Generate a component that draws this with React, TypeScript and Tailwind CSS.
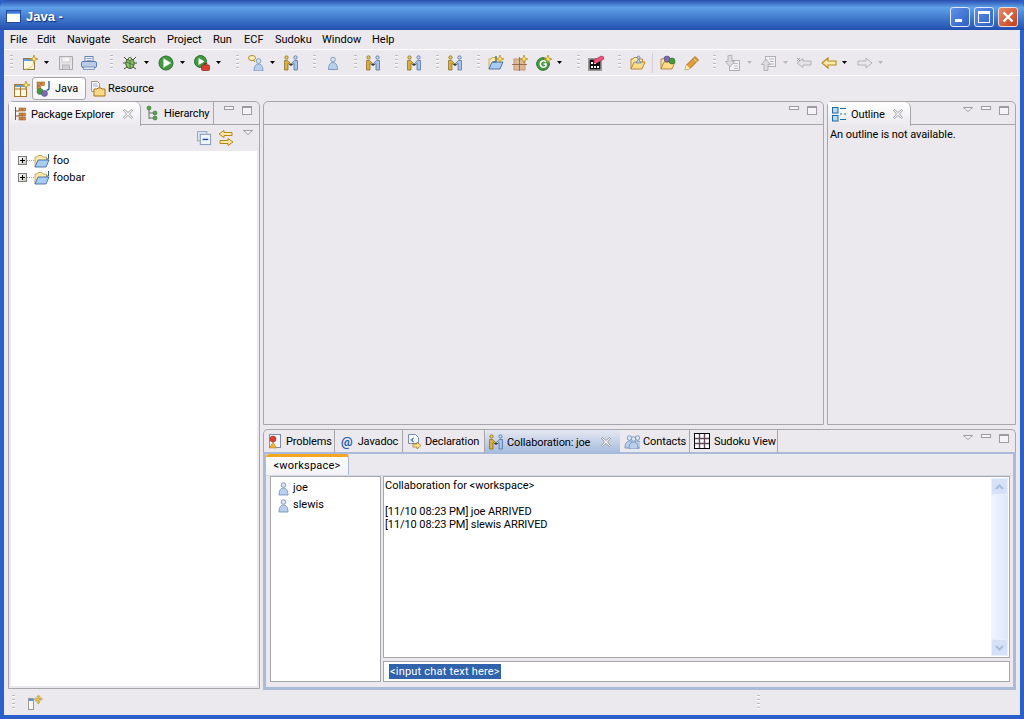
import React from "react";

const Ic = ({ children, className = "" }: { children: React.ReactNode; className?: string }) => (
  <svg viewBox="0 0 16 16" className={`w-4 h-4 shrink-0 ${className}`}>{children}</svg>
);
const Star = ({ x = 0, y = 0 }: { x?: number; y?: number }) => (
  <path transform={`translate(${x} ${y})`} d="M4 0l1 3 3 1-3 1-1 3-1-3-3-1 3-1z" fill="#fbe96f" stroke="#b58a1c" strokeWidth=".7" />
);
const Arrow = ({ ml, off }: { ml: string; off?: boolean }) => (
  <svg viewBox="0 0 5 3" className={`w-[5px] h-[3px] shrink-0 ${ml}`}><path d="M0 0h5L2.5 3z" fill={off ? "#b8b7ba" : "#000"} /></svg>
);
const Grip = ({ ml }: { ml: string }) => (
  <div className={`w-[3px] h-[16px] shrink-0 flex flex-col gap-[2px] ${ml}`}>
    {[0, 1, 2, 3].map((i) => <div key={i} className="w-[3px] h-[2px] bg-[#bdbcc0] border-b border-white" />)}
  </div>
);
const Person = ({ x = 0, y = 0, body = "#b9cfec", line = "#6b8bba" }: { x?: number; y?: number; body?: string; line?: string }) => (
  <g transform={`translate(${x} ${y})`}>
    <circle cx="5.5" cy="3" r="2.3" fill="#dbe6f5" stroke={line} strokeWidth=".8" />
    <path d="M1 13c0-5 2-7 4.5-7S10 8 10 13z" fill={body} stroke={line} strokeWidth=".8" />
  </g>
);
const Hands = ({ className = "" }: { className?: string }) => (
  <Ic className={className}>
    <circle cx="3.5" cy="2.5" r="1.7" fill="#e5c75c" stroke="#84661a" strokeWidth=".7" />
    <path d="M1.5 15V5.5h3.2L8 9v1.6L5 8.4V15z" fill="#d8b040" stroke="#84661a" strokeWidth=".7" />
    <circle cx="12.5" cy="2.5" r="1.7" fill="#c4d6ef" stroke="#44689c" strokeWidth=".7" />
    <path d="M14.5 15V5.5h-3.2L8 9v1.6l3-2.2V15z" fill="#a9c3e6" stroke="#44689c" strokeWidth=".7" />
    <path d="M6.5 9.6h3" stroke="#3a3a3a" strokeWidth="1.2" />
  </Ic>
);
const Folder = ({ blue }: { blue?: boolean }) => (
  <>
    <path d="M1 14V4h2l1-1.5h4L9 4h3.5v3" fill="#fde9a8" stroke={blue ? "#b89a50" : "#a8701c"} strokeWidth=".8" />
    <path d="M1 14l3-7h11l-3 7z" fill={blue ? "#a9cdf2" : "#fddc8c"} stroke={blue ? "#2f5c9c" : "#a8701c"} strokeWidth=".8" />
  </>
);
const Xclose = ({ className = "" }: { className?: string }) => (
  <svg viewBox="0 0 10 10" className={`w-[10px] h-[10px] shrink-0 ${className}`}>
    <path d="M.5 1.5l1-1L5 3.5 8.5.5l1 1L6.5 5l3 3.5-1 1L5 6.5l-3.5 3-1-1L3.5 5z" fill="#f5f5f8" stroke="#8f8f95" strokeWidth=".8" />
  </svg>
);
const MinBtn = ({ className = "" }: { className?: string }) => (
  <div className={`w-[10px] h-[4px] border border-[#9c9ba0] bg-[#f4f3f6] shrink-0 ${className}`} />
);
const MaxBtn = ({ className = "" }: { className?: string }) => (
  <div className={`w-[10px] h-[9px] border border-[#9c9ba0] border-t-2 bg-[#f4f3f6] shrink-0 ${className}`} />
);
const Tri = ({ className = "" }: { className?: string }) => (
  <svg viewBox="0 0 10 5" className={`w-[10px] h-[5px] shrink-0 ${className}`}><path d="M.5.5h9L5 4.5z" fill="#f4f3f6" stroke="#9c9ba0" /></svg>
);
const Expander = () => (
  <div className="w-[9px] h-[9px] border border-[#7b7b7b] bg-gradient-to-br from-white to-[#c9c5b8] flex items-center justify-center relative shrink-0">
    <div className="w-[5px] h-px bg-black absolute" />
    <div className="w-px h-[5px] bg-black absolute" />
  </div>
);
const TreeRow = ({ label }: { label: string }) => (
  <div className="h-[17px] flex items-center">
    <div className="ml-[7px]"><Expander /></div>
    <div className="w-[7px] border-t border-dotted border-[#a0a0a0]" />
    <Ic>
      <Folder blue />
      <path d="M14.5 1v5h-2" fill="none" stroke="#2f5c9c" strokeWidth="1" />
    </Ic>
    <span className="ml-[3px] pt-[2px]">{label}</span>
  </div>
);
const Tab = ({ w, icon, label, kind = "plain", close, pl = "pl-[3px]", gap = "ml-[3px]" }: { w: string; icon: React.ReactNode; label: string; kind?: "plain" | "sel" | "act"; close?: boolean; pl?: string; gap?: string }) => {
  const bg = kind === "sel" ? "bg-gradient-to-b from-white to-[#ebe9ed] rounded-tr-[6px] h-[24px] -mb-px border-b-0 z-10" : kind === "act" ? "bg-gradient-to-b from-[#e6e8f2] to-[#a3b9dc] rounded-t-[5px] h-[24px] -mb-px border-b-0 border-r-0 z-10" : "h-[23px]";
  return (
    <div className={`flex items-center shrink-0 border-r border-[#a7a6aa] relative ${w} ${pl} ${bg}`}>
      {icon}
      <span className={`whitespace-nowrap pt-[3px] tracking-[-0.12px] ${gap}`}>{label}</span>
      {close && <Xclose className={`ml-auto ${kind === "act" ? "mr-[9px]" : "mr-[7px]"}`} />}
    </div>
  );
};
const PkgIcon = () => (
  <Ic>
    <path d="M3.5 1v13" stroke="#7a5a2a" fill="none" />
    <path d="M3.5 5H7M3.5 10H7" stroke="#7a5a2a" fill="none" />
    <g fill="#d88a3c" stroke="#8c4c14" strokeWidth=".5">
      <rect x="7" y="2" width="3" height="3" /><rect x="10.5" y="2" width="3" height="3" />
      <rect x="7" y="7" width="3" height="3" /><rect x="10.5" y="7" width="3" height="3" />
      <rect x="7" y="11" width="3" height="3" /><rect x="10.5" y="11" width="3" height="3" />
    </g>
  </Ic>
);
const Toolbar = () => (
  <div className="h-[25px] flex items-center shrink-0 border-t border-white box-content">
    <Grip ml="ml-[6px]" />
    <Ic className="ml-[9px]">
      <rect x="1.5" y="3.5" width="11" height="11" fill="#fdf8e4" stroke="#8c7b4a" />
      <path d="M2 4h10v2H2z" fill="#6d9bd8" />
      <path d="M3 14c5 0 8-3 9-8" fill="none" stroke="#e8c860" />
      <Star x={8} y={0} />
    </Ic>
    <Arrow ml="ml-[6px]" />
    <Ic className="ml-[9px]">
      <path d="M1.5 1.5h13v13h-13z" fill="#e6e5e8" stroke="#a8a8ab" />
      <rect x="4" y="2" width="8" height="5" fill="#f6f6f7" stroke="#bdbdc0" strokeWidth=".7" />
      <rect x="4.5" y="10" width="7" height="4.5" fill="#d0d0d3" stroke="#a8a8ab" strokeWidth=".7" />
    </Ic>
    <Ic className="ml-[7px]">
      <rect x="4" y="1.5" width="8" height="6" fill="#f2f6fc" stroke="#6784b4" />
      <path d="M5.5 3.5h5M5.5 5.5h5" stroke="#8aa3cc" />
      <rect x=".5" y="6.5" width="15" height="6" rx="1.5" fill="#b9cbe6" stroke="#5d7dad" />
      <rect x="2.5" y="12" width="11" height="2.5" fill="#dfe7f3" stroke="#5d7dad" strokeWidth=".7" />
    </Ic>
    <Grip ml="ml-[13px]" />
    <Ic className="ml-[9px]">
      <path d="M2 2l3 3M14 2l-3 3M1 8h3M12 8h3M2 14l3-2M14 14l-3-2" stroke="#4c4c3a" />
      <ellipse cx="8" cy="8.5" rx="4.2" ry="5" fill="#8cc06a" stroke="#35602c" />
      <path d="M8 4v9M4.5 7l7 3" stroke="#35602c" strokeWidth=".7" />
      <circle cx="8" cy="4" r="1.7" fill="#c8d894" stroke="#35602c" strokeWidth=".7" />
    </Ic>
    <Arrow ml="ml-[6px]" />
    <Ic className="ml-[9px]">
      <circle cx="8" cy="8" r="7" fill="#43993f" stroke="#286d2c" />
      <path d="M5.5 3.5v9L13 8z" fill="#fff" stroke="#b6d9ae" strokeWidth=".6" />
    </Ic>
    <Arrow ml="ml-[6px]" />
    <Ic className="ml-[9px]">
      <circle cx="6.5" cy="6.5" r="6" fill="#43993f" stroke="#286d2c" />
      <path d="M4.5 3v7l6-3.5z" fill="#fff" />
      <rect x="7.5" y="10" width="8" height="5.5" rx="1" fill="#d8402f" stroke="#8c2318" strokeWidth=".7" />
      <path d="M10 10V8.5h3V10" fill="none" stroke="#8c2318" strokeWidth=".8" />
    </Ic>
    <Arrow ml="ml-[6px]" />
    <Grip ml="ml-[15px]" />
    <Ic className="ml-[9px]">
      <ellipse cx="4" cy="3" rx="3.5" ry="2.5" fill="#fdf3c8" stroke="#b58a1c" />
      <path d="M5 5l2 2" stroke="#b58a1c" />
      <Person x={5} y={3} />
    </Ic>
    <Arrow ml="ml-[6px]" />
    <Hands className="ml-[8px]" />
    <Grip ml="ml-[14px]" />
    <Ic className="ml-[9px]"><Person x={2.5} y={1.5} /></Ic>
    <Grip ml="ml-[13px]" />
    <Hands className="ml-[8px]" />
    <Grip ml="ml-[14px]" />
    <Hands className="ml-[8px]" />
    <Grip ml="ml-[14px]" />
    <Hands className="ml-[8px]" />
    <Grip ml="ml-[14px]" />
    <Ic className="ml-[8px]">
      <Folder blue />
      <path d="M8 1v6H5" fill="none" stroke="#2f5c9c" strokeWidth="1.2" />
      <Star x={8} y={0} />
    </Ic>
    <Ic className="ml-[8px]">
      <rect x="2" y="4" width="11" height="11" fill="#dcb89a" stroke="#c09878" />
      <path d="M7.5 2v14M0 9.5h15" stroke="#8a5a38" strokeWidth=".8" />
      <Star x={8} y={0} />
    </Ic>
    <Ic className="ml-[8px]">
      <circle cx="7" cy="9" r="6.3" fill="#43993f" stroke="#286d2c" />
      <path d="M10 7a3.2 3.2 0 1 0 0 4V9H7.5" fill="none" stroke="#fff" strokeWidth="1.6" />
      <Star x={8} y={0} />
    </Ic>
    <Arrow ml="ml-[5px]" />
    <Grip ml="ml-[15px]" />
    <Ic className="ml-[8px]">
      <rect x=".5" y="3.5" width="13" height="12" fill="#d0d0d0" stroke="#999" />
      <rect x="1.5" y="4.5" width="11" height="10" fill="#111" />
      <path d="M3 7h2v2H3zM6 7h2v2H6zM3 11h2v2H3zM6 11h2v2H6zM9 11h2v2H9z" fill="#fff" />
      <path d="M6 5l7-4 3 1v2L9 8H6z" fill="#ee4f7c" stroke="#a82c50" strokeWidth=".6" />
    </Ic>
    <Grip ml="ml-[14px]" />
    <Ic className="ml-[9px]">
      <Folder />
      <circle cx="8.5" cy="2.5" r="1.5" fill="#b9cfea" stroke="#54759e" strokeWidth=".7" />
      <path d="M6 8l2.5-4L11 8z" fill="#b9cfea" stroke="#54759e" strokeWidth=".7" />
    </Ic>
    <div className="w-px h-[20px] bg-[#d2d1d5] ml-[6px] shrink-0" />
    <Ic className="ml-[7px]">
      <Folder />
      <circle cx="7" cy="4" r="3" fill="#7d6cb0" stroke="#493a78" strokeWidth=".6" />
      <circle cx="12" cy="6" r="3" fill="#43993f" stroke="#286d2c" strokeWidth=".6" />
    </Ic>
    <Ic className="ml-[8px]">
      <path d="M1 15l1.500-5L11 1.500l3.500 3.500L6 13.500z" fill="#e59c34" stroke="#99601a" strokeWidth=".8" />
      <path d="M1 15l1.500-5 3.500 3.500z" fill="#fff5b8" />
      <path d="M10 4l2.500 2.500" stroke="#fbe3a8" />
    </Ic>
    <Grip ml="ml-[13px]" />
    <Ic className="ml-[9px]">
      <rect x="4.5" y="5.5" width="10" height="10" fill="#f2f2f4" stroke="#b0b0b3" />
      <path d="M8 8.5h5M9 11h4M9 13.5h4" stroke="#bcbcc0" />
      <path d="M3 .5h4v6h2.5L5 12 .5 6.5H3z" fill="#dcdcdf" stroke="#a8a8ab" strokeWidth=".8" />
    </Ic>
    <Arrow ml="ml-[6px]" off />
    <Ic className="ml-[9px]">
      <rect x="4.5" y="1.5" width="10" height="10" fill="#f2f2f4" stroke="#b0b0b3" />
      <path d="M8 4h5M9 6.5h4M9 9h4" stroke="#bcbcc0" />
      <path d="M3 15.5h4v-6h2.5L5 4 .5 9.5H3z" fill="#dcdcdf" stroke="#a8a8ab" strokeWidth=".8" />
    </Ic>
    <Arrow ml="ml-[6px]" off />
    <Ic className="ml-[8px]">
      <path d="M1 8l6-4.500V6h8v4H7v2.500z" fill="#e4e4e6" stroke="#b2b2b5" />
      <path d="M1 3l3 3M4 3L1 6" stroke="#9a9a9d" />
    </Ic>
    <Ic className="ml-[9px]">
      <path d="M1 8l6-5v3h8v4H7v3z" fill="#fde9a8" stroke="#b8851c" strokeWidth="1.1" />
    </Ic>
    <Arrow ml="ml-[5px]" />
    <Ic className="ml-[10px]">
      <path d="M15 8L9 3v3H1v4h8v3z" fill="#e8e8ea" stroke="#b2b2b5" />
    </Ic>
    <Arrow ml="ml-[5px]" off />
  </div>
);

const menus: [string, string][] = [
  ["File", "w-[27px]"], ["Edit", "w-[30px]"], ["Navigate", "w-[55px]"], ["Search", "w-[45px]"],
  ["Project", "w-[46px]"], ["Run", "w-[31px]"], ["ECF", "w-[31px]"], ["Sudoku", "w-[47px]"],
  ["Window", "w-[50px]"], ["Help", "w-[30px]"],
];

export default function App() {
  return (
    <div className="w-[1024px] h-[719px] overflow-hidden flex flex-col bg-[#2b5fc9] [font-family:Roboto,sans-serif] text-[11px] text-black">
      {/* title bar */}
      <div className="h-[30px] shrink-0 flex items-center pt-[3px] pl-[6px] pr-[6px] rounded-t-[7px] bg-gradient-to-b from-[#2a4db0] via-[#5fa0e8] via-25% to-[#234fae]">
        <svg viewBox="0 0 16 14" className="w-[15px] h-[13px] shrink-0">
          <rect x=".5" y=".5" width="15" height="13" fill="#fff" stroke="#1d3f9c" />
          <rect x="1" y="1" width="14" height="3" fill="#3c78d8" />
        </svg>
        <span className="ml-[5px] text-white font-bold text-[13px] [font-family:Liberation_Sans,sans-serif] [text-shadow:1px_1px_1px_#0f2a80]">Java -</span>
        <div className="ml-auto flex gap-[4px]">
          <div className="w-[20px] h-[20px] rounded-[3px] border border-[#dfe8f8] bg-gradient-to-br from-[#5f92e6] to-[#2f5fc4] flex items-end pl-[4px] pb-[4px]">
            <div className="w-[7px] h-[3px] bg-white" />
          </div>
          <div className="w-[20px] h-[20px] rounded-[3px] border border-[#dfe8f8] bg-gradient-to-br from-[#5f92e6] to-[#2f5fc4] flex items-center justify-center">
            <div className="w-[12px] h-[12px] border border-white border-t-[3px]" />
          </div>
          <div className="w-[20px] h-[20px] rounded-[3px] border border-[#f0dcd4] bg-gradient-to-br from-[#e88a68] to-[#c23c14] flex items-center justify-center">
            <svg viewBox="0 0 12 12" className="w-[12px] h-[12px]"><path d="M1.5 1.5l9 9M10.5 1.5l-9 9" stroke="#fff" strokeWidth="2.4" /></svg>
          </div>
        </div>
      </div>
      {/* client */}
      <div className="flex-1 min-h-0 mx-[4px] mb-[4px] bg-[#ebe9ed] flex flex-col">
        <div className="h-[19px] shrink-0 flex items-center pl-[6px]">
          {menus.map(([m, w]) => <span key={m} className={`${w} shrink-0 pt-[2px]`}>{m}</span>)}
        </div>
        <Toolbar />
        {/* perspective bar */}
        <div className="h-[26px] shrink-0 border-t border-white flex items-center pl-[10px]">
          <Ic>
            <rect x=".5" y="3.5" width="12" height="12" fill="#fdf8e4" stroke="#a8752c" />
            <path d="M.5 8h12M6.5 4v11" stroke="#a8752c" />
            <path d="M1 4h11v2H1z" fill="#6d9bd8" />
            <Star x={8} y={0} />
          </Ic>
          <div className="ml-[2px] w-[54px] h-[23px] rounded-[3px] border border-[#a7a6aa] bg-gradient-to-b from-white to-[#f5f4f7] flex items-center pl-[3px] shrink-0">
            <Ic>
              <rect x="1" y="1" width="3.5" height="3.5" fill="#d88a3c" stroke="#8c4c14" strokeWidth=".5" />
              <rect x="5" y="1" width="3.5" height="3.5" fill="#d88a3c" stroke="#8c4c14" strokeWidth=".5" />
              <rect x="1" y="5" width="3.5" height="3.5" fill="#d88a3c" stroke="#8c4c14" strokeWidth=".5" />
              <path d="M13 0v7a2 2 0 0 1-2.5 2" fill="none" stroke="#2f5c9c" strokeWidth="1.4" />
              <circle cx="4" cy="10.5" r="3" fill="#43993f" stroke="#286d2c" strokeWidth=".5" />
              <circle cx="8.5" cy="12.5" r="3" fill="#7d6cb0" stroke="#493a78" strokeWidth=".5" />
            </Ic>
            <span className="ml-[3px] pt-[2px]">Java</span>
          </div>
          <Ic className="ml-[4px]">
            <path d="M1.5 .5h6l2 2v8h-8z" fill="#f8f8fa" stroke="#a09880" />
            <path d="M3 3h4M3 5h5" stroke="#9fb4d4" />
            <path d="M4 15V8h3l1-1h3l1 1h3v7z" fill="#fdd98a" stroke="#a8701c" />
          </Ic>
          <span className="ml-[2px] pt-[2px]">Resource</span>
        </div>
        {/* main */}
        <div className="h-[589px] shrink-0 flex pl-[4px] pr-[4px] gap-[3px]">
          {/* left panel */}
          <div className="w-[252px] h-[588px] shrink-0 border border-[#a7a6aa] rounded-t-[5px] flex flex-col">
            <div className="h-[23px] shrink-0 flex items-center border-b border-[#a7a6aa]">
              <Tab w="w-[132px]" kind="sel" close icon={<PkgIcon />} label="Package Explorer" pl="pl-[3px]" />
              <Tab w="w-[73px]" icon={
                <Ic>
                  <path d="M4 3v11M4 8h5M4 13h5" stroke="#6a6a6a" fill="none" />
                  <circle cx="4" cy="3" r="2" fill="#5aa64f" stroke="#2e6c2a" strokeWidth=".6" />
                  <circle cx="10" cy="8" r="2" fill="#5aa64f" stroke="#2e6c2a" strokeWidth=".6" />
                  <circle cx="10" cy="13" r="2" fill="#5aa64f" stroke="#2e6c2a" strokeWidth=".6" />
                </Ic>
              } label="Hierarchy" pl="pl-[4px]" />
              <div className="flex items-start self-start mt-[4px] ml-[10px] gap-[8px]">
                <MinBtn /><MaxBtn />
              </div>
            </div>
            <div className="h-[26px] shrink-0 flex items-start pt-[5px] pl-[188px]">
              <svg viewBox="0 0 16 16" className="w-[15px] h-[15px] shrink-0 mt-[1px]">
                <rect x=".5" y=".5" width="10" height="10" fill="#dbe4ef" stroke="#94a7bf" />
                <rect x="3.5" y="3.5" width="11" height="11" fill="#f0f5fb" stroke="#7d95b5" />
                <path d="M6 9h6" stroke="#1d4f94" strokeWidth="1.5" />
              </svg>
              <Ic className="ml-[6px]">
                <path d="M6 .5L1 4l5 3.5V5.500h8v-3H6z" fill="#fde9a8" stroke="#b8851c" />
                <path d="M10 8.5L15 12l-5 3.5v-2H2v-3h8z" fill="#fde9a8" stroke="#b8851c" />
              </Ic>
              <Tri className="ml-[9px]" />
            </div>
            <div className="flex-1 mx-[2px] mb-[2px] bg-white pt-[1px]">
              <TreeRow label="foo" />
              <TreeRow label="foobar" />
            </div>
          </div>
          {/* right column */}
          <div className="w-[753px] shrink-0 flex flex-col gap-[4px]">
            <div className="h-[324px] shrink-0 flex gap-[3px]">
              <div className="w-[561px] shrink-0 border border-[#a7a6aa] rounded-t-[5px]">
                <div className="h-[23px] border-b border-[#a7a6aa] flex justify-end items-start pt-[4px] pr-[6px] gap-[8px]">
                  <MinBtn /><MaxBtn />
                </div>
              </div>
              <div className="flex-1 border border-[#a7a6aa] rounded-t-[5px] flex flex-col">
                <div className="h-[23px] shrink-0 border-b border-[#a7a6aa] flex items-center">
                  <Tab w="w-[83px]" kind="sel" close label="Outline" pl="pl-[4px]" icon={
                    <Ic>
                      <rect x=".5" y="1.5" width="5.5" height="5.5" fill="#bcd8f2" stroke="#1f6aa8" />
                      <rect x=".5" y="9.5" width="5.5" height="5.5" fill="#bcd8f2" stroke="#1f6aa8" />
                      <path d="M8 2.5h6M8 8h2M12 8h2M8 13.5h6" stroke="#1f6aa8" />
                    </Ic>
                  } />
                  <div className="flex items-start self-start mt-[4px] ml-auto mr-[6px] gap-[8px]">
                    <Tri className="mt-[1px]" /><MinBtn /><MaxBtn />
                  </div>
                </div>
                <div className="pl-[2px] pt-[3px] leading-[13px] tracking-[-0.08px]">An outline is not available.</div>
              </div>
            </div>
            {/* bottom panel */}
            <div className="h-[261px] shrink-0 flex flex-col">
              <div className="h-[23px] shrink-0 flex items-center border border-b-0 border-[#a7a6aa] rounded-t-[5px] pl-[1px]">
                <Tab w="w-[70px]" label="Problems" pl="pl-[2px]" icon={
                  <Ic>
                    <rect x="2.5" y="1.5" width="11" height="13" fill="#f4f6fb" stroke="#7d8db0" />
                    <circle cx="6" cy="6" r="3" fill="#e03c30" stroke="#8c2318" strokeWidth=".5" />
                    <path d="M6 9l3.5 6h-7z" fill="#f2b134" stroke="#a8701c" strokeWidth=".5" />
                  </Ic>
                } />
                <div className="w-[68px] h-[23px] shrink-0 flex items-center border-r border-[#a7a6aa] pl-[6px]">
                  <span className="text-[#1f5fb0] text-[13px] font-bold leading-none">@</span>
                  <span className="ml-[5px] pt-[3px] tracking-[-0.12px]">Javadoc</span>
                </div>
                <Tab w="w-[82px]" label="Declaration" icon={
                  <Ic>
                    <path d="M2.5 1.5h7l3 3v6h-10z" fill="#f4f6fb" stroke="#7d8db0" />
                    <path d="M8 5a2 2 0 0 0-2 2 2 2 0 0 0 2 2M4.5 7H7" fill="none" stroke="#2f6ab0" />
                    <path d="M7 11h4V9l4 3.5-4 3.5v-2H7z" fill="#fde08a" stroke="#a8701c" strokeWidth=".7" />
                  </Ic>
                } />
                <Tab w="w-[135px]" kind="act" close label="Collaboration: joe" icon={<Hands />} />
                <Tab w="w-[70px]" label="Contacts" pl="pl-[4px]" icon={
                  <Ic>
                    <Person x={0} y={2} />
                    <Person x={8} y={2} />
                    <Person x={4} y={3} />
                  </Ic>
                } />
                <Tab w="w-[88px]" label="Sudoku View" pl="pl-[4px]" gap="ml-[4px]" icon={
                  <Ic>
                    <rect x=".5" y=".5" width="15" height="15" fill="#fff" stroke="#000" />
                    <path d="M1 5.5h14M1 10.5h14M5.5 1v14M10.5 1v14" stroke="#604858" strokeWidth="1.4" />
                  </Ic>
                } />
                <div className="flex items-start self-start mt-[4px] ml-auto mr-[6px] gap-[8px]">
                  <Tri className="mt-[1px]" /><MinBtn /><MaxBtn />
                </div>
              </div>
              <div className="flex-1 min-h-0 border-[3px] border-t-2 border-[#a9bbd9] flex flex-col">
                <div className="h-[22px] shrink-0 border-b border-[#d3d9e6] flex">
                  <div className="w-[83px] h-[21px] border-r border-[#a9bbd9] rounded-t-[3px] border-t-[3px] border-t-[#f5a623] bg-gradient-to-b from-white to-[#f2f1f5] flex items-center justify-center tracking-[0.2px]">
                    &lt;workspace&gt;
                  </div>
                </div>
                <div className="flex pl-[4px] gap-[2px]">
                  <div className="w-[111px] h-[206px] shrink-0 border border-[#a7a6aa] bg-white pt-[3px]">
                    {["joe", "slewis"].map((n) => (
                      <div key={n} className="h-[17px] flex items-center pl-[7px]">
                        <svg viewBox="0 0 11 14" className="w-[11px] h-[14px] shrink-0"><Person /></svg>
                        <span className="ml-[4px]">{n}</span>
                      </div>
                    ))}
                  </div>
                  <div className="w-[627px] shrink-0 flex flex-col gap-[3px]">
                    <div className="h-[182px] shrink-0 border border-[#a7a6aa] bg-white flex">
                      <div className="flex-1 pl-[1px] pt-[2px] leading-[13px]">
                        <div>Collaboration for &lt;workspace&gt;</div>
                        <div className="h-[13px]" />
                        <div className="tracking-[-0.08px]">[11/10 08:23 PM] joe ARRIVED</div>
                        <div className="tracking-[-0.08px]">[11/10 08:23 PM] slewis ARRIVED</div>
                      </div>
                      <div className="w-[17px] mr-[1px] shrink-0 my-px bg-gradient-to-r from-[#f0f5ff] to-[#dce8fb] flex flex-col justify-between">
                        <div className="h-[17px] rounded-[2px] border border-[#e6effc] bg-[#d4e1f8] flex items-center justify-center">
                          <svg viewBox="0 0 9 6" className="w-[9px] h-[6px]"><path d="M1 5l3.5-3.5L8 5" fill="none" stroke="#a9bedd" strokeWidth="2" /></svg>
                        </div>
                        <div className="h-[17px] rounded-[2px] border border-[#e6effc] bg-[#d4e1f8] flex items-center justify-center">
                          <svg viewBox="0 0 9 6" className="w-[9px] h-[6px]"><path d="M1 1l3.5 3.5L8 1" fill="none" stroke="#a9bedd" strokeWidth="2" /></svg>
                        </div>
                      </div>
                    </div>
                    <div className="h-[21px] shrink-0 border border-[#a7a6aa] bg-white flex items-start pt-[2px] pl-[5px]">
                      <span className="bg-[#3162ac] text-white px-px leading-[15px] tracking-[0.2px]">&lt;input chat text here&gt;</span>
                    </div>
                  </div>
                </div>
              </div>
            </div>
          </div>
        </div>
        {/* status bar */}
        <div className="flex-1 flex items-center">
          <Grip ml="ml-[8px]" />
          <svg viewBox="0 0 15 15" className="w-[15px] h-[15px] shrink-0 ml-[13px]">
            <rect x=".5" y="3.5" width="5" height="11" fill="#f8f8f0" stroke="#9a9a9a" />
            <rect x="1" y="4" width="4" height="2" fill="#5b93d8" />
            <path d="M10.5 0l1.5 1.5h-1v2h2v-1l1.5 1.5-1.500 1.500v-1h-2v2h1L10.500 9 9 7.500h1v-2H8v1L6.500 4 8 2.500v1h2v-2H9z" fill="#f5cf5a" stroke="#a8801c" strokeWidth=".5" />
          </svg>
          <Grip ml="ml-[714px]" />
        </div>
      </div>
    </div>
  );
}
